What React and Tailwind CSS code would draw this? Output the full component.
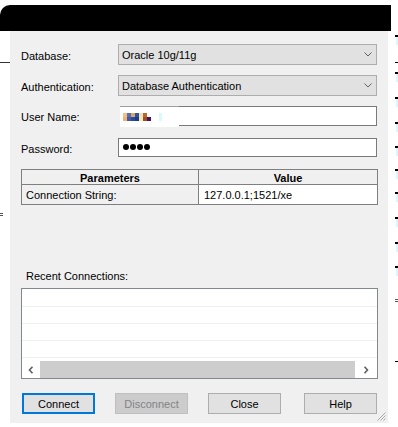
import React from "react";

function Chevron() {
  return (
    <svg width="8" height="5" viewBox="0 0 8 5" className="shrink-0">
      <path d="M0.5 0.5 L4 4 L7.5 0.5" stroke="#606060" strokeWidth="1" fill="none" />
    </svg>
  );
}

function Select({ text }) {
  return (
    <div className="w-[259px] h-[21px] bg-[#e1e1e1] border border-[#adadad] flex items-center justify-between pl-[3px] pr-[4px]">
      <span>{text}</span>
      <Chevron />
    </div>
  );
}

function Label({ children }) {
  return <div className="w-[97px] pt-[2px]">{children}</div>;
}

function Mark() {
  return (
    <div className="flex flex-col">
      <div className="w-[4px] h-[2px] bg-black" />
      <div className="ml-[1px] w-[2px] h-[8px] bg-[#dcf6fb]" />
    </div>
  );
}

function Btn({ children, variant, className }) {
  const base = "w-[73px] h-[21px] flex items-center justify-center";
  if (variant === "default")
    return <div className={`${base} border-2 border-[#0078d7] bg-[#e1e1e1] ${className || ""}`}>{children}</div>;
  if (variant === "disabled")
    return <div className={`${base} border border-[#bfbfbf] bg-[#cccccc] text-[#838383] ${className || ""}`}>{children}</div>;
  return <div className={`${base} border border-[#adadad] bg-[#e1e1e1] ${className || ""}`}>{children}</div>;
}

export default function App() {
  const px = [
    ["#f3c08a", "#f0b070"],
    ["#5a6cb0", "#4858a8"],
    ["#d8a860", "#2a4aa0"],
    ["#3050a0", "#1a3c90"],
    ["#f0e0c0", "#f8e8b0"],
    ["#b86a30", "#a05020"],
    ["#ffffff", "#4a1060"],
  ];
  return (
    <div className="w-[398px] h-[427px] bg-white overflow-hidden font-['Liberation_Sans',Arial,sans-serif] text-[11px] leading-[14px] text-black">
      <div className="h-[5px]" />
      <div className="h-[26px] w-[391px] bg-black rounded-tl-[10px]" />
      <div className="flex">
        {/* left strip */}
        <div className="w-[10px] flex flex-col">
          <div className="mt-[31px] h-[1px] w-[10px] bg-[#333]" />
          <div className="mt-[150px] ml-[0px] w-[3px] h-[3px] border-t border-b border-[#555]" />
        </div>

        {/* dialog panel */}
        <div className="relative w-[378px] h-[392px] bg-[#f0f0f0] pl-[11px] pt-[13px] flex flex-col">
          <div className="flex items-center h-[21px]">
            <Label>Database:</Label>
            <Select text="Oracle 10g/11g" />
          </div>
          <div className="flex items-center h-[21px] mt-[10px]">
            <Label>Authentication:</Label>
            <Select text="Database Authentication" />
          </div>
          <div className="flex items-center h-[20px] mt-[10px]">
            <Label>User Name:</Label>
            <div className="relative w-[259px] h-[20px] bg-white border border-[#7a7a7a]">
              <div className="absolute left-[-1px] top-[-2px] w-[61px] h-[23px] bg-[#f0f0f0]">
                <div className="ml-[2px] mt-[1px] h-[21px] bg-white border-t border-[#a0a0a0] flex items-center pl-[3px]">
                  <div className="flex">
                    {px.map((c, i) => (
                      <div key={i} className="flex flex-col">
                        <div className="w-[4px] h-[4px]" style={{ background: c[0] }} />
                        <div className="w-[4px] h-[4px]" style={{ background: c[1] }} />
                      </div>
                    ))}
                    <div className="ml-[8px] w-[3px] h-[8px] bg-[#d8fafa]" />
                  </div>
                </div>
              </div>
            </div>
          </div>
          <div className="flex items-center h-[19px] mt-[12px]">
            <Label>Password:</Label>
            <div className="w-[259px] h-[19px] bg-white border border-[#7a7a7a] flex items-center pl-[4px] pb-[1px] gap-[1px]">
              <div className="w-[6px] h-[6px] rounded-full bg-black" />
              <div className="w-[6px] h-[6px] rounded-full bg-black" />
              <div className="w-[6px] h-[6px] rounded-full bg-black" />
              <div className="w-[6px] h-[6px] rounded-full bg-black" />
            </div>
          </div>

          {/* parameters table */}
          <div className="mt-[12px] w-[357px] border border-[#7f7f7f] flex flex-col">
            <div className="flex h-[15px] border-b border-[#7f7f7f] font-bold">
              <div className="w-[177px] border-r border-[#7f7f7f] text-center pt-[1px]">Parameters</div>
              <div className="flex-1 text-center pt-[1px]">Value</div>
            </div>
            <div className="flex h-[19px] items-center">
              <div className="w-[177px] h-full border-r border-[#7f7f7f] bg-[#f0f0f0] pl-[4px] flex items-center">Connection String:</div>
              <div className="flex-1 h-full bg-white pl-[5px] flex items-center">127.0.0.1;1521/xe</div>
            </div>
          </div>

          <div className="mt-[64px] pl-[5px] h-[14px]">Recent Connections:</div>

          {/* recent list */}
          <div className="mt-[5px] w-[357px] h-[91px] border border-[#828790] bg-white flex flex-col">
            <div className="h-[1px]" />
            <div className="h-[17px] border-b border-[#f0f0f0]" />
            <div className="h-[17px] border-b border-[#f0f0f0]" />
            <div className="h-[17px] border-b border-[#f0f0f0]" />
            <div className="h-[17px] border-b border-[#f0f0f0]" />
            <div className="mt-auto h-[17px] flex">
              <div className="w-[18px] flex items-center justify-center">
                <svg width="6" height="8" viewBox="0 0 6 8">
                  <path d="M4.5 0.8 L1.5 4 L4.5 7.2" stroke="#606060" strokeWidth="1.6" fill="none" />
                </svg>
              </div>
              <div className="flex-1 bg-[#cdcdcd]" />
              <div className="w-[22px] flex items-center justify-center">
                <svg width="6" height="8" viewBox="0 0 6 8">
                  <path d="M1.5 0.8 L4.5 4 L1.5 7.2" stroke="#606060" strokeWidth="1.6" fill="none" />
                </svg>
              </div>
            </div>
          </div>

          {/* buttons */}
          <div className="mt-[14px] flex">
            <Btn variant="default" className="ml-[1px]">Connect</Btn>
            <Btn variant="disabled" className="ml-[20px]">Disconnect</Btn>
            <Btn className="ml-[20px]">Close</Btn>
            <Btn className="ml-[23px]">Help</Btn>
          </div>

          {/* resize grip */}
          <svg width="9" height="9" viewBox="0 0 9 9" className="absolute right-[2px] bottom-[2px]">
            <path d="M8.5 0.5 L0.5 8.5 M8.5 3.5 L3.5 8.5 M8.5 6.5 L6.5 8.5" stroke="#a8a8a8" strokeWidth="1" />
          </svg>
        </div>

        {/* right strip */}
        <div className="w-[10px] flex flex-col pl-[7px]">
          <div className="mt-[4px]"><Mark /></div>
          <div className="mt-[17px] w-[4px] h-[1px] bg-black" />
          <div className="mt-[9px]"><Mark /></div>
          <div className="mt-[15px]"><Mark /></div>
          <div className="mt-[15px]"><Mark /></div>
          <div className="mt-[14px]"><Mark /></div>
          <div className="mt-[13px]"><Mark /></div>
          <div className="mt-[13px]"><Mark /></div>
          <div className="mt-[15px]"><Mark /></div>
          <div className="mt-[15px]"><Mark /></div>
          <div className="mt-[14px]"><Mark /></div>
          <div className="mt-[23px] w-[3px] h-[3px] border-t border-b border-[#555]" />
          <div className="mt-[59px] w-[4px] h-[1px] bg-black" />
        </div>
      </div>
    </div>
  );
}
